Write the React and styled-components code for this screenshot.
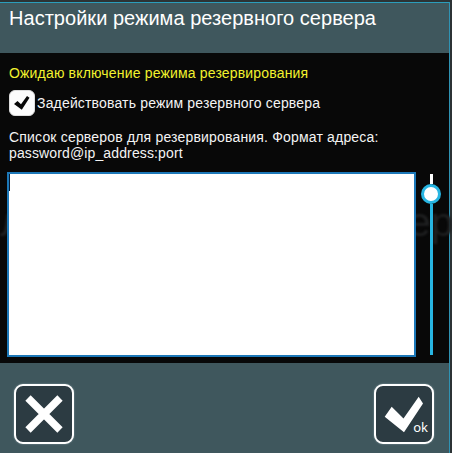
import React from "react";
import styled, { createGlobalStyle } from "styled-components";

const GlobalStyle = createGlobalStyle`
  * { box-sizing: border-box; }
  body { margin: 0; background: #2c3335; overflow: hidden; }
`;

const Dialog = styled.main`
  position: relative;
  display: flex;
  flex-direction: column;
  width: 450px;
  height: 453px;
  padding-top: 2px;
  font-family: "Liberation Sans", Arial, sans-serif;
  color: #fff;
`;

const Frame = styled.div`
  flex: 1;
  display: flex;
  flex-direction: column;
  min-height: 0;
  border-top: 1px solid #2b9dbb;
  border-right: 1px solid #2f93b3;
`;

const Header = styled.header`
  height: 50px;
  padding: 3px 9px 0;
  background: #3f575d;
`;

const Title = styled.h1`
  margin: 0;
  font-size: 20px;
  line-height: 24px;
  font-weight: 400;
  white-space: nowrap;
  letter-spacing: 0.03px;
`;

const Body = styled.section`
  height: 310px;
  padding: 12px 0 0 7px;
  background: #080808;
`;

const Line = styled.p`
  margin: 0;
  padding-left: 2px;
  font-size: 14px;
  line-height: 16px;
  white-space: nowrap;
  color: ${(p) => p.$color || "#f4f4f4"};
  letter-spacing: ${(p) => p.$spacing || "0.17px"};
`;

const CheckRow = styled.label`
  display: flex;
  align-items: center;
  height: 26px;
  margin: 9px 0 13px 2px;
`;

const CheckBox = styled.span`
  display: grid;
  place-items: center;
  width: 26px;
  height: 26px;
  border-radius: 6px;
  border: 1px solid #ddd;
  background: #fcfcfc;
`;

const Editor = styled.div`
  display: flex;
  align-items: flex-start;
  margin-top: 11px;
`;

const TextField = styled.div`
  position: relative;
  z-index: 1;
  width: 409px;
  height: 185px;
  border: 2px solid #1c78b8;
  background: #fff;
`;

const Caret = styled.div`
  width: 1px;
  height: 17px;
  background: #081c34;
`;

const Slider = styled.div`
  position: relative;
  z-index: 1;
  display: flex;
  flex-direction: column;
  align-items: center;
  width: 20px;
  height: 181px;
  margin: 2px 0 0 5px;
`;

const TrackTop = styled.div`
  width: 3px;
  height: 10px;
  background: #fff;
`;

const Knob = styled.div`
  width: 20px;
  height: 20px;
  flex: none;
  border: 3px solid #27b5e2;
  border-radius: 50%;
  background: #fff;
`;

const TrackBottom = styled.div`
  width: 3px;
  flex: 1;
  background: #27b5e2;
`;

const Ghost = styled.span`
  position: absolute;
  top: 197px;
  left: ${(p) => p.$left};
  font-size: 41px;
  line-height: 50px;
  color: #1f2021;
  filter: blur(0.8px);
`;

const Footer = styled.footer`
  flex: 1;
  display: flex;
  justify-content: space-between;
  align-items: flex-start;
  padding: 21px 15px 0 14px;
  background: #3f575d;
`;

const ActionButton = styled.button`
  display: flex;
  width: 60px;
  height: 60px;
  padding: 0;
  border: 2px solid #fff;
  border-radius: 9px;
  background: #2c3b42;
  box-shadow: 0 0 2px rgba(220, 240, 245, 0.45);
  position: relative;
`;

const OkLabel = styled.span`
  position: absolute;
  right: 4px;
  bottom: 6px;
  font: 13px/17px "Noto Sans", sans-serif;
  color: #fff;
`;

export default function App() {
  return (
    <>
      <GlobalStyle />
      <Dialog>
        <Frame>
          <Header>
            <Title>Настройки режима резервного сервера</Title>
          </Header>
          <Body>
            <Line $color="#f2f22e">Ожидаю включение режима резервирования</Line>
            <CheckRow>
              <CheckBox>
                <svg width="24" height="24" viewBox="0 0 24 24">
                  <path d="M4 13 L7.5 10 L11 13.3 L17 5 L19.5 6.8 L11.8 18.8 Z" fill="#080808" />
                </svg>
              </CheckBox>
              <Line>Задействовать режим резервного сервера</Line>
            </CheckRow>
            <Line $spacing="0.18px">Список серверов для резервирования. Формат адреса:</Line>
            <Line $spacing="0.13px">password@ip_address:port</Line>
            <Editor>
              <TextField><Caret /></TextField>
              <Slider>
                <TrackTop />
                <Knob />
                <TrackBottom />
              </Slider>
            </Editor>
          </Body>
          <Footer>
            <ActionButton aria-label="cancel">
              <svg width="56" height="56" viewBox="0 0 56 56">
                <path d="M12 12 L44 44 M44 12 L12 44" stroke="#fff" strokeWidth="7.5" />
              </svg>
            </ActionButton>
            <ActionButton>
              <svg width="56" height="56" viewBox="0 0 56 56">
                <path d="M8.7 30.7 L15.7 20.7 L27.5 32.5 L42.7 10.7 L47 17.5 L28 46.3 Z" fill="#fff" />
              </svg>
              <OkLabel>ok</OkLabel>
            </ActionButton>
          </Footer>
        </Frame>
        <Ghost $left="0">л</Ghost>
        <Ghost $left="408px">ер</Ghost>
      </Dialog>
    </>
  );
}
